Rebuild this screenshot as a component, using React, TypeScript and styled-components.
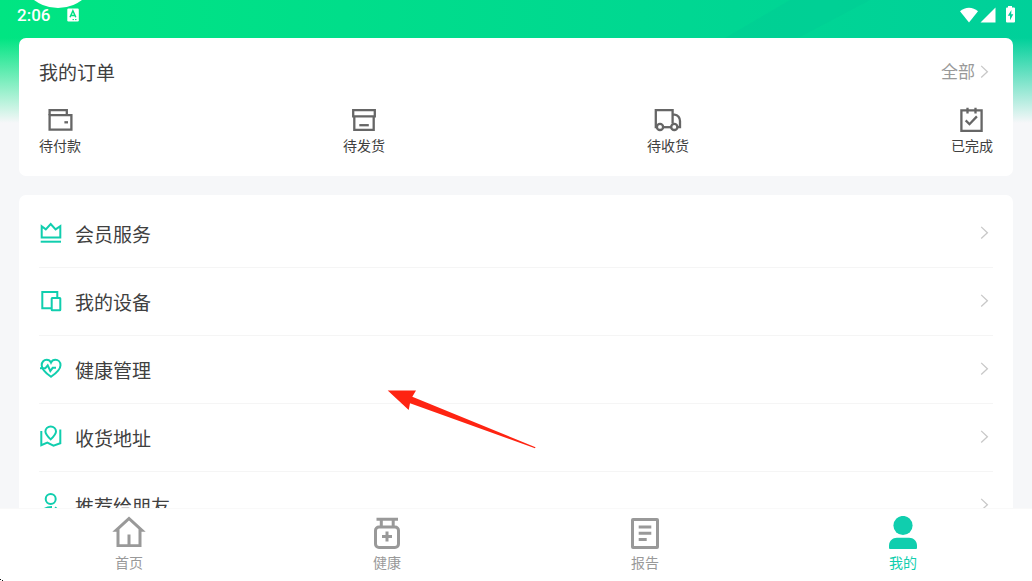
import React from "react";
import styled, { createGlobalStyle } from "styled-components";

const GlobalStyle = createGlobalStyle`
  *, *::before, *::after { box-sizing: border-box; }
  body {
    margin: 0;
    background: #f6f7f9;
    color: #404040;
    font-family: Roboto, "Noto Sans CJK SC", sans-serif;
  }
  button { font: inherit; color: inherit; background: none; border: 0; padding: 0; cursor: pointer; }
  a { color: inherit; text-decoration: none; }
  svg { display: block; flex: none; }
`;

const Screen = styled.div`
  position: relative;
  display: flex;
  flex-direction: column;
  height: 100vh;
  overflow: hidden;
  background:
    linear-gradient(to bottom, rgba(246, 247, 249, 0) 38px, #f6f7f9 123px),
    linear-gradient(to right, #00e582, #00d09a);
`;

const Sheen = styled.svg`
  position: absolute;
  top: 0;
  right: 0;
`;

const Avatar = styled.div`
  position: absolute;
  left: 18px;
  top: -72px;
  width: 80px;
  height: 80px;
  border-radius: 50%;
  background: #ffffff;
`;

const StatusBar = styled.header`
  position: relative;
  flex: none;
  display: flex;
  align-items: center;
  justify-content: space-between;
  height: 30px;
  padding: 0 17px;
  color: #ffffff;
`;

const StatusGroup = styled.div<{ $gap: number }>`
  display: flex;
  align-items: center;
  gap: ${(p) => p.$gap}px;
`;

const Clock = styled.time`
  font-size: 17px;
  line-height: 20px;
  font-weight: 500;
`;

const Content = styled.main`
  position: relative;
  flex: 1;
  min-height: 0;
  overflow: hidden;
  display: flex;
  flex-direction: column;
  gap: 19px;
  padding: 8px 19px 0;
`;

const Card = styled.section`
  flex: none;
  border-radius: 7px;
  background: #ffffff;
`;

const OrdersCard = styled(Card)`
  display: flex;
  flex-direction: column;
  gap: 20px;
  padding: 20px;
`;

const MenuCard = styled(Card)`
  padding: 5px 20px;
`;

const CardHeader = styled.div`
  display: flex;
  align-items: center;
  justify-content: space-between;
  height: 28px;
`;

const CardTitle = styled.h2`
  margin: 0;
  padding-top: 4px;
  font-size: 19px;
  line-height: 28px;
  font-weight: 400;
`;

const AllLink = styled.a`
  display: flex;
  align-items: center;
  gap: 2px;
  font-size: 17px;
  line-height: 28px;
  color: #999999;
`;

const OrderList = styled.div`
  display: flex;
  justify-content: space-between;
`;

const OrderButton = styled.button`
  display: flex;
  flex-direction: column;
  align-items: center;
  gap: 2px;
  font-size: 14px;
  line-height: 20px;
`;

const MenuRow = styled.a`
  display: flex;
  align-items: center;
  gap: 11px;
  height: 68px;
  border-bottom: 1px solid #f5f5f5;
  font-size: 19px;
  line-height: 28px;
`;

const MenuLabel = styled.span`
  flex: 1;
  padding-top: 4px;
`;

const TabBar = styled.nav`
  position: relative;
  flex: none;
  display: grid;
  grid-template-columns: repeat(4, 1fr);
  padding: 7px 0 8px;
  border-top: 1px solid #f9f9f9;
  background: #ffffff;
`;

const TabLink = styled.a<{ $active: boolean }>`
  display: flex;
  flex-direction: column;
  align-items: center;
  gap: 3px;
  font-size: 14px;
  line-height: 20px;
  color: ${(p) => (p.$active ? "#10ceae" : "#999999")};
`;

const Pointer = styled.svg`
  position: absolute;
  left: 387px;
  top: 390px;
  pointer-events: none;
`;

const CornerMark = styled.svg`
  position: absolute;
  left: 0;
  bottom: 0;
`;

const Chevron = () => (
  <svg width="16" height="17" viewBox="0 0 16 17" fill="none" stroke="#c8c8c8" strokeWidth="1.3" aria-hidden="true">
    <path d="M4.2 1.9 10.4 7.7 4.2 13.5" />
  </svg>
);

const orders = [
  {
    label: "待付款",
    icon: (
      <>
        <path d="M3.6 9.2V4.2H20.8V9.2" />
        <path d="M3.6 9.2H25.4V23.6H3.6Z" />
        <path d="M18.400 16.300H22" />
      </>
    ),
  },
  {
    label: "待发货",
    icon: (
      <>
        <path d="M3.2 4.2H24.8V10.4H3.2Z" />
        <path d="M4.3 10.4V23.8H23.7V10.4" />
        <path d="M9.3 19.2H18.8" />
      </>
    ),
  },
  {
    label: "待收货",
    icon: (
      <>
        <path d="M2.8 21.2H1.8V4.2H18.6V17.5" />
        <path d="M18.6 8.6H20.5C24 8.8 26 12 26 15V21.2H23.6" />
        <path d="M9.3 21.2H17" />
        <circle cx="6" cy="20.9" r="3.1" />
        <circle cx="20.3" cy="20.9" r="3.1" />
      </>
    ),
  },
  {
    label: "已完成",
    icon: (
      <>
        <path d="M3.4 4.4H23.6V24.9H3.4Z" />
        <path d="M9.5 1.7V7.4M17.5 1.7V7.4" />
        <path d="M7.7 14.4 11.5 18.2 18.9 10.4" />
      </>
    ),
  },
];

const menu = [
  {
    label: "会员服务",
    icon: (
      <>
        <path d="M2.7 5.2 6.8 8.4 11.7 3 16.6 8.4 21.3 5.2V16.4H2.7Z" />
        <path d="M1.7 20.7H22" />
      </>
    ),
  },
  {
    label: "我的设备",
    icon: (
      <>
        <path d="M18.3 8.7V3H3.3V19.3H12.7" />
        <rect x="12.7" y="8.9" width="8.6" height="12.4" rx="0.5" />
      </>
    ),
  },
  {
    label: "健康管理",
    icon: (
      <>
        <path d="M12 19.8C7.500 16.600 2.700 13 2.700 8.200C2.700 4.800 5 2.800 7.600 2.800C9.500 2.800 11.200 3.900 12 5.600C12.800 3.900 14.500 2.800 16.400 2.800C19 2.800 21.500 4.800 21.500 8.200C21.500 13 16.500 16.600 12 19.800Z" />
        <path d="M1 11.300H6.300L8.700 8.400 11.300 14 13.700 10.800H17" />
      </>
    ),
  },
  {
    label: "收货地址",
    icon: (
      <>
        <path d="M11.700 14.400C8.500 11.300 6.400 9 6.400 6.500A5.300 5.100 0 0 1 17 6.500C17 9 14.900 11.300 11.700 14.400Z" />
        <path d="M2.300 6V20.200L8.300 17.700 14.500 20.700 21.300 18.300V4.500" />
      </>
    ),
  },
  {
    label: "推荐给朋友",
    icon: (
      <>
        <circle cx="11.7" cy="6" r="5" />
        <path d="M2.500 21.500C2.500 17 6.500 13.800 13 13.900M16 14.300 20 18M20 18H14M20 18 16 22" />
      </>
    ),
  },
];

const tabs = [
  {
    label: "首页",
    active: false,
    icon: (
      <path
        fill="currentColor"
        fillRule="evenodd"
        d="M17 .5 33.700 15.800H29.500V31H4.500V15.800H.3ZM17 4.600 7.500 13.300V28.200H15.500V18.500H18.500V28.200H26.500V13.300Z"
      />
    ),
  },
  {
    label: "健康",
    active: false,
    icon: (
      <g fill="none" stroke="currentColor" strokeWidth="3">
        <path d="M6.500 3.300H28M11.300 3.300V11M23.200 3.300V11" />
        <rect x="5.500" y="11" width="23" height="20.500" rx="3.500" />
        <path d="M17 15.500V25.500M12 20.500H22" />
      </g>
    ),
  },
  {
    label: "报告",
    active: false,
    icon: (
      <g fill="none" stroke="currentColor" strokeWidth="3">
        <rect x="4.500" y="3.500" width="25" height="28" rx="0.5" />
        <path d="M10.700 11H23.300M10.700 17.300H23.300M10.700 23.500H18.700" />
      </g>
    ),
  },
  {
    label: "我的",
    active: true,
    icon: (
      <g fill="currentColor">
        <circle cx="17" cy="9.500" r="9.600" />
        <path d="M11 21.700H23C27.500 21.700 31 25 31 29.500V32Q31 33 30 33H4Q3 33 3 32V29.500C3 25 6.500 21.700 11 21.700Z" />
      </g>
    ),
  },
];

export default function App() {
  return (
    <Screen>
      <GlobalStyle />
      <Sheen width="392" height="38" viewBox="0 0 392 38" aria-hidden="true">
        <path d="M150 0H230L158 38H85Z" fill="#00c896" fillOpacity="0.35" />
      </Sheen>
      <Avatar />
      <StatusBar>
        <StatusGroup $gap={17}>
          <Clock>2:06</Clock>
          <svg width="12" height="14" viewBox="0 0 12 14" aria-hidden="true">
            <rect x="0.300" y="0.500" width="11.500" height="13" rx="1.200" fill="#fff" />
            <path d="M3 9.300 5.900 2.800 8.800 9.300M4 7.400H7.800" fill="none" stroke="#00e184" strokeWidth="1.500" />
            <path d="M5.500 11.600H7M8 11.600H9.500" stroke="#00e184" />
          </svg>
        </StatusGroup>
        <StatusGroup $gap={2}>
          <svg width="18" height="16" viewBox="0 0 18 16" fill="#fff" aria-hidden="true">
            <path d="M9 15.500 0 4.300C5 -.6 13 -.6 18 4.300Z" />
          </svg>
          <svg width="16" height="16" viewBox="0 0 16 16" fill="#fff" aria-hidden="true">
            <path d="M15.500 .5V15.500H.5Z" />
          </svg>
          <svg width="17" height="18" viewBox="0 0 17 18" aria-hidden="true">
            <path d="M10 0H14V1.600H16Q17 1.600 17 2.600V15.500Q17 16.500 16 16.500H9Q8 16.500 8 15.500V2.600Q8 1.600 9 1.600H10Z" fill="#fff" />
            <path d="M13.400 4 9.800 9.800H12V14.300L15.300 8.300H13.200Z" fill="#00d09a" />
          </svg>
        </StatusGroup>
      </StatusBar>

      <Content>
        <OrdersCard>
          <CardHeader>
            <CardTitle>我的订单</CardTitle>
            <AllLink href="#orders">
              全部
              <Chevron />
            </AllLink>
          </CardHeader>
          <OrderList>
            {orders.map((o) => (
              <OrderButton key={o.label} type="button">
                <svg width="28" height="28" viewBox="0 0 28 28" fill="none" stroke="#666666" strokeWidth="2.300" aria-hidden="true">
                  {o.icon}
                </svg>
                {o.label}
              </OrderButton>
            ))}
          </OrderList>
        </OrdersCard>

        <MenuCard>
          {menu.map((m) => (
            <MenuRow key={m.label} href="#menu">
              <svg width="25" height="25" viewBox="0 0 25 25" fill="none" stroke="#10ceae" strokeWidth="2" aria-hidden="true">
                {m.icon}
              </svg>
              <MenuLabel>{m.label}</MenuLabel>
              <Chevron />
            </MenuRow>
          ))}
        </MenuCard>
      </Content>

      <TabBar>
        {tabs.map((t) => (
          <TabLink key={t.label} href="#tab" $active={t.active} aria-current={t.active ? "page" : undefined}>
            <svg width="34" height="34" viewBox="0 0 34 34" aria-hidden="true">
              {t.icon}
            </svg>
            {t.label}
          </TabLink>
        ))}
      </TabBar>

      <Pointer width="150" height="60" viewBox="0 0 150 60" aria-hidden="true">
        <path d="M.7 .5H29L25.300 6.700 148.500 57.200 148 58.300 23 13.300 21.700 20Z" fill="#fe2412" />
      </Pointer>
      <CornerMark width="3" height="3" viewBox="0 0 3 3" aria-hidden="true">
        <path d="M0 1H1V2H3V3H2V2H0Z" fill="#111111" />
      </CornerMark>
    </Screen>
  );
}
